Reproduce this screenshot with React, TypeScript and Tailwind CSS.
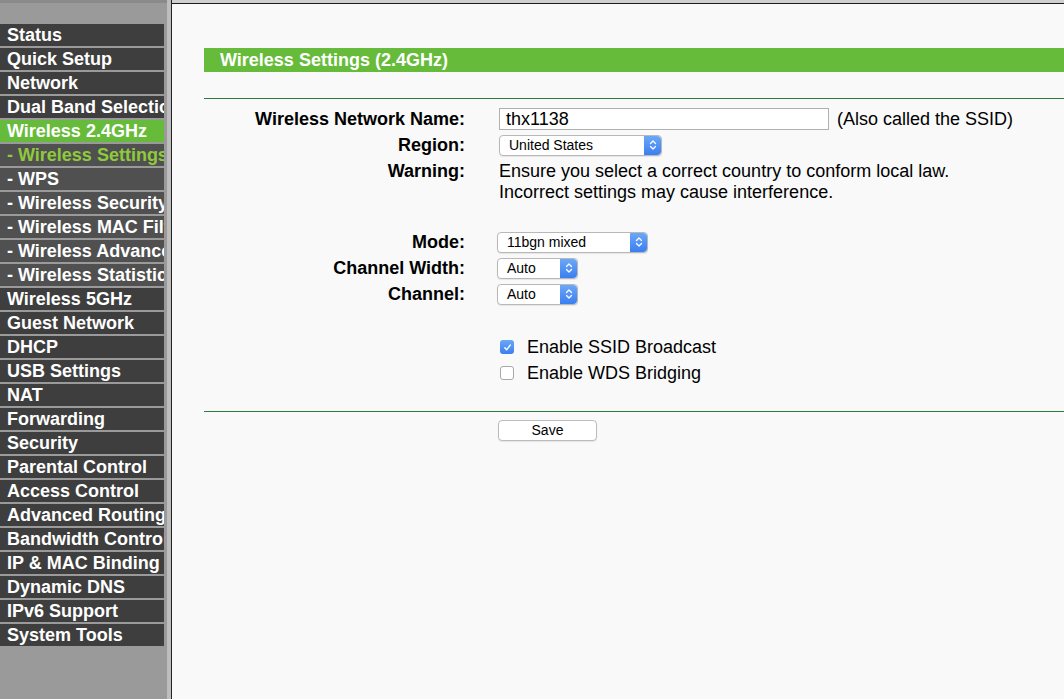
import type { FC, ReactNode } from 'react';

type MenuItem = { label: string; sub?: boolean; active?: boolean };

const MENU: MenuItem[] = [
  { label: 'Status' },
  { label: 'Quick Setup' },
  { label: 'Network' },
  { label: 'Dual Band Selection' },
  { label: 'Wireless 2.4GHz', active: true },
  { label: '- Wireless Settings', sub: true, active: true },
  { label: '- WPS', sub: true },
  { label: '- Wireless Security', sub: true },
  { label: '- Wireless MAC Filtering', sub: true },
  { label: '- Wireless Advanced', sub: true },
  { label: '- Wireless Statistics', sub: true },
  { label: 'Wireless 5GHz' },
  { label: 'Guest Network' },
  { label: 'DHCP' },
  { label: 'USB Settings' },
  { label: 'NAT' },
  { label: 'Forwarding' },
  { label: 'Security' },
  { label: 'Parental Control' },
  { label: 'Access Control' },
  { label: 'Advanced Routing' },
  { label: 'Bandwidth Control' },
  { label: 'IP & MAC Binding' },
  { label: 'Dynamic DNS' },
  { label: 'IPv6 Support' },
  { label: 'System Tools' },
];

const Sidebar: FC = () => (
  <div className="flex h-full w-[172px] shrink-0">
    <div className="flex w-[167px] flex-col bg-[#9a9a9a]">
      <div className="h-[3px] bg-[#8a8a8a]" />
      <div className="flex flex-col gap-[2px] pt-[21px]">
        {MENU.map((item) => {
          let cls = 'bg-[#3e3e3e] text-white';
          if (item.sub) cls = item.active ? 'bg-[#505050] text-[#8fca3c]' : 'bg-[#505050] text-white';
          else if (item.active) cls = 'bg-[#66bb3a] text-white';
          return (
            <div
              key={item.label}
              className={`h-[22px] w-[164px] overflow-hidden whitespace-nowrap pl-[7px] text-[18px] font-bold leading-[22px] ${cls}`}
            >
              {item.label}
            </div>
          );
        })}
      </div>
    </div>
    <div className="w-[4px] bg-[#bdbdbd]" />
    <div className="w-px bg-[#222]" />
  </div>
);

const Stepper: FC = () => (
  <div className="flex h-full w-[17px] items-center justify-center rounded-r-[4px] bg-gradient-to-b from-[#6aa8f7] to-[#3b7ef0]">
    <svg width="8" height="12" viewBox="0 0 8 12" fill="none" stroke="white" strokeWidth="1.3" strokeLinecap="round" strokeLinejoin="round">
      <path d="M1.5 4.5 L4 2 L6.5 4.5" />
      <path d="M1.5 7.5 L4 10 L6.5 7.5" />
    </svg>
  </div>
);

const Select: FC<{ value: string; width: string }> = ({ value, width }) => (
  <div className={`flex h-[21px] ${width} items-center rounded-[4px] border border-[#b8b8b8] bg-white shadow-[0_1px_1px_rgba(0,0,0,0.08)]`}>
    <span className="flex-1 pl-[9px] text-[14px] leading-none text-black">{value}</span>
    <Stepper />
  </div>
);

const Checkbox: FC<{ checked?: boolean }> = ({ checked }) =>
  checked ? (
    <div className="flex h-[14px] w-[14px] items-center justify-center rounded-[3px] bg-gradient-to-b from-[#6aa8f7] to-[#3b7ef0]">
      <svg width="9" height="9" viewBox="0 0 9 9" fill="none" stroke="white" strokeWidth="1.4" strokeLinecap="round" strokeLinejoin="round">
        <path d="M1.8 4.8 L3.7 6.8 L7.3 2" />
      </svg>
    </div>
  ) : (
    <div className="h-[14px] w-[14px] rounded-[3px] border border-[#a8a8a8] bg-white" />
  );

const Row: FC<{ label?: string; children: ReactNode; className?: string }> = ({ label, children, className = 'h-[26px] items-center' }) => (
  <div className={`flex ${className}`}>
    <div className="w-[261px] shrink-0 text-right text-[18px] font-bold text-black">{label}</div>
    {children}
  </div>
);

export default function App() {
  return (
    <div className="flex h-[699px] w-[1064px] overflow-hidden bg-[#f9f9f9] font-['Liberation_Sans',Arial,sans-serif]">
      <Sidebar />
      <div className="flex min-w-0 flex-1 flex-col">
        <div className="h-[3px] bg-[#d0d0d0]" />
        <div className="h-px bg-[#1c1c1c]" />
        <div className="flex flex-col pl-[32px]">
          <div className="mt-[44px] h-[24px] bg-[#66bb3a] pl-[16px] pt-px text-[18px] font-bold leading-[23px] text-white">
            Wireless Settings (2.4GHz)
          </div>
          <div className="mt-[26px] h-px bg-[#2f7a3f]" />

          <div className="mt-[7px] flex flex-col">
            <Row label="Wireless Network Name:">
              <div className="ml-[34px] flex h-[22px] w-[330px] items-center border border-[#b0b0b0] bg-white pl-[6px] text-[18px] text-black">
                thx1138
              </div>
              <span className="ml-[8px] text-[18px] text-black">(Also called the SSID)</span>
            </Row>
            <Row label="Region:">
              <div className="ml-[34px]">
                <Select value="United States" width="w-[163px]" />
              </div>
            </Row>
            <Row label="Warning:" className="pt-[3px] leading-[21px]">
              <div className="ml-[34px] text-[18px] leading-[21px] text-black">
                <div>Ensure you select a correct country to conform local law.</div>
                <div>Incorrect settings may cause interference.</div>
              </div>
            </Row>

            <div className="mt-[26px] flex flex-col">
              <Row label="Mode:">
                <div className="ml-[32px]">
                  <Select value="11bgn mixed" width="w-[151px]" />
                </div>
              </Row>
              <Row label="Channel Width:">
                <div className="ml-[32px]">
                  <Select value="Auto" width="w-[81px]" />
                </div>
              </Row>
              <Row label="Channel:">
                <div className="ml-[32px]">
                  <Select value="Auto" width="w-[81px]" />
                </div>
              </Row>
            </div>

            <div className="mt-[27px] flex flex-col">
              <Row>
                <div className="ml-[35px] flex items-center gap-[13px] text-[18px] text-black">
                  <Checkbox checked />
                  <span>Enable SSID Broadcast</span>
                </div>
              </Row>
              <Row>
                <div className="ml-[35px] flex items-center gap-[13px] text-[18px] text-black">
                  <Checkbox />
                  <span>Enable WDS Bridging</span>
                </div>
              </Row>
            </div>
          </div>

          <div className="mt-[25px] h-px bg-[#2f7a3f]" />
          <div className="mt-[8px] pl-[294px]">
            <div className="flex h-[21px] w-[99px] items-center justify-center rounded-[4px] border border-[#bcbcbc] bg-white text-[14px] text-black shadow-[0_1px_1px_rgba(0,0,0,0.08)]">
              Save
            </div>
          </div>
        </div>
      </div>
    </div>
  );
}
